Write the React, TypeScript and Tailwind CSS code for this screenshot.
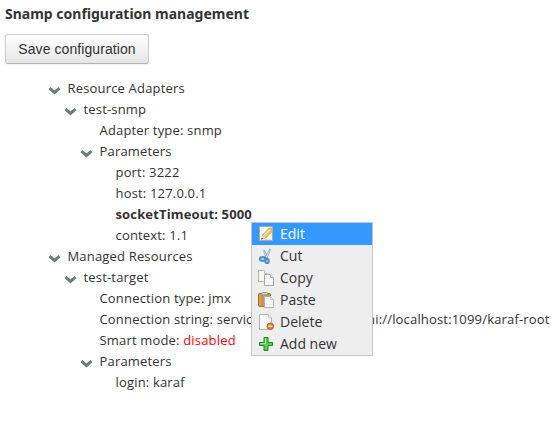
import type { ReactNode } from 'react';

type Row = { text: string; depth: number; branch?: boolean; bold?: boolean; status?: string };

const rows: Row[] = [
  { text: 'Resource Adapters', depth: 0, branch: true },
  { text: 'test-snmp', depth: 1, branch: true },
  { text: 'Adapter type: snmp', depth: 2 },
  { text: 'Parameters', depth: 2, branch: true },
  { text: 'port: 3222', depth: 3 },
  { text: 'host: 127.0.0.1', depth: 3 },
  { text: 'socketTimeout: 5000', depth: 3, bold: true },
  { text: 'context: 1.1', depth: 3 },
  { text: 'Managed Resources', depth: 0, branch: true },
  { text: 'test-target', depth: 1, branch: true },
  { text: 'Connection type: jmx', depth: 2 },
  { text: 'Connection string: service:jmx:rmi:///jndi/rmi://localhost:1099/karaf-root', depth: 2 },
  { text: 'Smart mode: ', depth: 2, status: 'disabled' },
  { text: 'Parameters', depth: 2, branch: true },
  { text: 'login: karaf', depth: 3 },
];

const indent = ['pl-[48px]', 'pl-[64px]', 'pl-[80px]', 'pl-[96px]'];

function Chevron() {
  return (
    <svg width="13" height="8" viewBox="0 0 13 8" className="mt-[4px] shrink-0">
      <path d="M1.500 1.200 6.500 5.500l5-4.300" fill="none" stroke="#6f7e72" strokeWidth="3" />
    </svg>
  );
}

function Icon({ children }: { children: ReactNode }) {
  return (
    <svg width="16" height="16" viewBox="0 0 16 16" className="shrink-0">
      {children}
    </svg>
  );
}

const menu: { label: string; icon: ReactNode }[] = [
  {
    label: 'Edit',
    icon: (
      <Icon>
        <rect x="1.500" y="0.500" width="13" height="14" rx="0.500" fill="#fdfdfb" stroke="#a7aaa5" />
        <path d="M3 13.500h10" stroke="#e2e2dd" />
        <path d="m4.500 9 7-7 3 3-7 7-3 .5Z" fill="#f4c45c" stroke="#c98b35" strokeWidth="0.800" />
        <path d="m6 9.500 6.500-6.500" stroke="#fff0a8" strokeWidth="1.400" />
        <path d="m11 2.500 1-1h1.500L15 3v1.500l-1 1Z" fill="#e8a586" />
        <path d="m4.500 9.300-1 3.700 3.700-1.200Z" fill="#efd9b4" />
        <path d="m3.800 11.500-.6 1.900 1.900-.6Z" fill="#2e3436" />
      </Icon>
    ),
  },
  {
    label: 'Cut',
    icon: (
      <Icon>
        <path d="M6 2v3l2.500 5 1-1L8 5Z" fill="#c9dcea" stroke="#7fa4c0" strokeWidth="0.800" />
        <path d="m12 .8-4.500 8L9 10l3-7Z" fill="#e7f0f6" stroke="#7fa4c0" strokeWidth="0.800" />
        <ellipse cx="4.500" cy="11" rx="2.600" ry="1.800" fill="none" stroke="#4f93c9" strokeWidth="2.200" />
        <ellipse cx="9" cy="12.900" rx="1.700" ry="2" fill="none" stroke="#4f93c9" strokeWidth="2.200" />
        <path d="m6 9 3 2" stroke="#4286be" strokeWidth="1.500" />
      </Icon>
    ),
  },
  {
    label: 'Copy',
    icon: (
      <Icon>
        <path d="M.5.500h6l3 3v8h-9Z" fill="#f6f6f5" stroke="#b5b6b4" />
        <path d="M6.500.500v3h3" fill="#fff" stroke="#c5c6c4" />
        <path d="M6.500 4.500h6l3 3v8h-9Z" fill="#f4f4f3" stroke="#a7a9a6" />
        <path d="M12.500 4.500v3h3" fill="#fff" stroke="#b7b9b6" />
      </Icon>
    ),
  },
  {
    label: 'Paste',
    icon: (
      <Icon>
        <rect x="0.500" y="1.500" width="12" height="13" rx="1" fill="#c99550" stroke="#a36b1d" />
        <path d="M2 3v10" stroke="#dfb16e" />
        <rect x="3.500" y="0.500" width="6" height="2.500" rx="1" fill="#d3d3c8" stroke="#99927d" />
        <path d="M6.500 4.500h6l3 3v8h-9Z" fill="#fafaf9" stroke="#b0b1ae" />
        <path d="M12.500 4.500v3h3" fill="#fff" stroke="#c5c6c4" />
      </Icon>
    ),
  },
  {
    label: 'Delete',
    icon: (
      <Icon>
        <path d="M1.500.500h9l3 3v12h-12Z" fill="#f7f7f6" stroke="#b5b6b4" />
        <path d="M10.500.500v3h3" fill="#fff" stroke="#c5c6c4" />
        <circle cx="12.300" cy="12.300" r="3.300" fill="#ed7430" stroke="#d8591a" />
        <path d="M10.300 12.300h4" stroke="#fff" strokeWidth="1.600" />
      </Icon>
    ),
  },
  {
    label: 'Add new',
    icon: (
      <Icon>
        <path d="M6 1.500h4v5h4.500v3H10v5H6v-5H1.500v-3H6Z" fill="#65cb55" stroke="#198b18" />
        <path d="M7.500 2.500v5h-5" fill="none" stroke="#aaec98" />
      </Icon>
    ),
  },
];

export default function App() {
  return (
    <main className="relative h-[434px] w-[553px] overflow-hidden bg-white font-['Open_Sans',sans-serif] text-[13px] text-[#333]">
      <h1 className="h-[34px] pl-[5px] pt-[4px] font-['Noto_Sans','Open_Sans',sans-serif] text-[14px] font-bold leading-5">
        <span>Snamp configuration management</span>
      </h1>
      <button className="ml-[5px] flex h-[30px] w-[144px] items-center justify-center rounded-[3px] border border-[#ccc] border-b-[#b3b3b3] bg-linear-to-b from-white to-[#e6e6e6] font-['Liberation_Sans',sans-serif] text-[14px] leading-5 tracking-[0.08px] shadow-[0_1px_2px_rgba(0,0,0,0.05)]">
        Save configuration
      </button>
      <ul className="mt-[14px]">
        {rows.map((row, i) => (
          <li key={i} className={`flex h-[21px] items-center whitespace-nowrap ${indent[row.depth]}`}>
            <span className="flex w-[19.500px] shrink-0">{row.branch && <Chevron />}</span>
            <span className={row.bold ? 'font-bold tracking-[0.15px]' : 'tracking-[0.175px]'}>
              {row.text}
              {row.status && <span className="text-[#f00]">{row.status}</span>}
            </span>
          </li>
        ))}
      </ul>
      <ul className="absolute left-[251px] top-[222px] w-[122px] border border-[#c6c6c6] bg-[#eee] text-[14px]">
        {menu.map((item, i) => (
          <li
            key={item.label}
            className={`flex h-[22px] items-center gap-[6px] pl-[6px] ${i === 0 ? 'bg-[#3399ff] text-white' : ''}`}
          >
            {item.icon}
            <span className="pb-[2px]">{item.label}</span>
          </li>
        ))}
      </ul>
    </main>
  );
}
